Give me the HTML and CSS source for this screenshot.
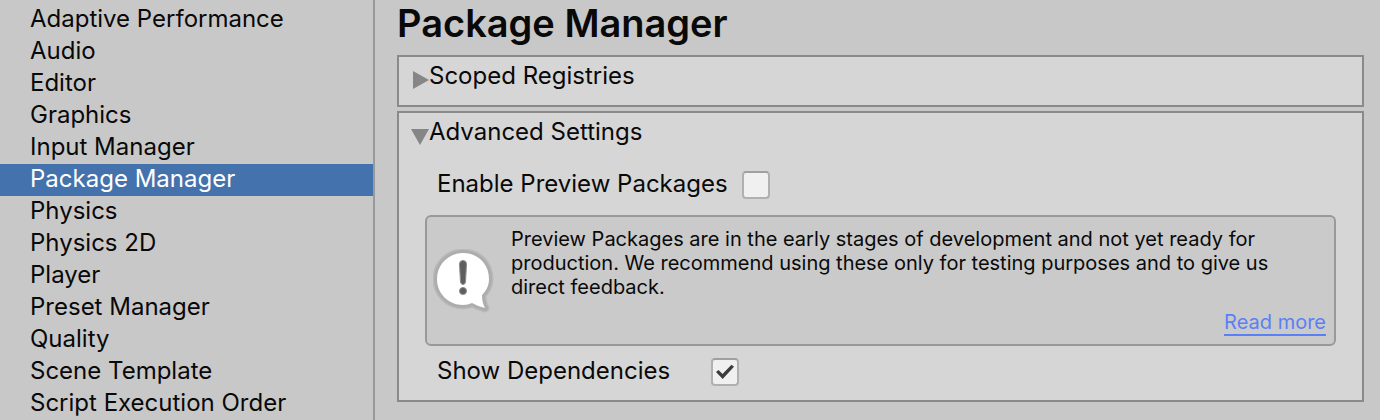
FILE: index.html
```html
<!DOCTYPE html>
<html lang="en">
<head>
<meta charset="utf-8">
<title>Project Settings</title>
<link rel="stylesheet" href="styles.css">
</head>
<body>
<div class="window">
  <nav class="sidebar">
    <a class="nav-item" href="#">Adaptive Performance</a>
    <a class="nav-item" href="#">Audio</a>
    <a class="nav-item" href="#">Editor</a>
    <a class="nav-item" href="#">Graphics</a>
    <a class="nav-item" href="#">Input Manager</a>
    <a class="nav-item selected" href="#" aria-current="page">Package Manager</a>
    <a class="nav-item" href="#">Physics</a>
    <a class="nav-item" href="#">Physics 2D</a>
    <a class="nav-item" href="#">Player</a>
    <a class="nav-item" href="#">Preset Manager</a>
    <a class="nav-item" href="#">Quality</a>
    <a class="nav-item" href="#">Scene Template</a>
    <a class="nav-item" href="#">Script Execution Order</a>
  </nav>
  <main class="content">
    <h1 class="title">Package Manager</h1>
    <section class="panel">
      <button class="foldout" type="button" aria-expanded="false">
        <svg class="arrow" viewBox="0 0 20 20" aria-hidden="true"><path d="M4 2 L20 11 L4 20 Z"/></svg>
        <span>Scoped Registries</span>
      </button>
    </section>
    <section class="panel">
      <button class="foldout" type="button" aria-expanded="true">
        <svg class="arrow" viewBox="0 0 20 20" aria-hidden="true"><path d="M2 4 L20 4 L11 20 Z"/></svg>
        <span>Advanced Settings</span>
      </button>
      <div class="settings">
        <div class="field">
          <label class="field-label" for="preview">Enable Preview Packages</label>
          <input class="check" id="preview" type="checkbox">
        </div>
        <div class="help">
          <svg class="help-icon" viewBox="0 0 64 66" aria-hidden="true">
            <path class="halo" d="M30 4 C45 4 56 15 56 30 C56 37 53 42 49 46 Q49 54 52 59 Q44 57 39 54 Q35 56 30 56 C16 56 4 45 4 30 C4 15 16 4 30 4 Z"/>
            <path class="bubble" d="M30 4 C45 4 56 15 56 30 C56 37 53 42 49 46 Q49 54 52 59 Q44 57 39 54 Q35 56 30 56 C16 56 4 45 4 30 C4 15 16 4 30 4 Z"/>
            <path class="mark" d="M26.500 15 Q26.500 11.500 30 11.500 Q33.500 11.500 33.500 15 L32.500 33 Q32 35.500 30 35.500 Q28 35.500 27.500 33 Z"/>
            <circle class="mark" cx="30" cy="42" r="3.500"/>
          </svg>
          <div class="help-body">
            <p class="help-text">Preview Packages are in the early stages of development and not yet ready for production. We recommend using these only for testing purposes and to give us direct feedback.</p>
            <a class="read-more" href="#">Read more</a>
          </div>
        </div>
        <div class="field">
          <label class="field-label" for="deps">Show Dependencies</label>
          <input class="check" id="deps" type="checkbox" checked>
        </div>
      </div>
    </section>
  </main>
</div>
</body>
</html>
```
FILE: styles.css
```css
* {
  box-sizing: border-box;
}

body {
  margin: 0;
  background: #c8c8c8;
  color: #090909;
  font: 24px/30px Inter, "Liberation Sans", sans-serif;
}

.window {
  display: flex;
  min-height: 100vh;
}

.sidebar {
  flex: 0 0 375px;
  padding-top: 4px;
  border-right: 2px solid #999;
}

.nav-item {
  display: block;
  padding: 0 30px 2px;
  color: inherit;
  text-decoration: none;
}

.nav-item.selected {
  background: #4472ac;
  color: #fff;
}

.content {
  flex: 1;
  min-width: 0;
  padding: 0 16px 16px 22px;
}

.title {
  margin: 0 0 9px;
  font-size: 38px;
  line-height: 46px;
  font-weight: 600;
}

.panel {
  margin-bottom: 4px;
  padding: 4px 12px 12px;
  background: #d6d6d6;
  border: 2px solid #8a8a8a;
}

.foldout {
  display: flex;
  align-items: center;
  width: 100%;
  padding: 0;
  margin-bottom: 2px;
  border: 0;
  background: none;
  color: inherit;
  font: inherit;
  text-align: left;
}

.arrow {
  flex: none;
  width: 20px;
  height: 20px;
  margin: 8px 0 2px -2px;
  fill: #868686;
}

.settings {
  padding: 20px 14px 0;
}

.field {
  display: flex;
  align-items: center;
  min-height: 32px;
  padding: 0 12px;
}

.field-label {
  min-width: 260px;
  margin-right: 14px;
  padding-bottom: 2px;
}

.check {
  appearance: none;
  display: grid;
  place-items: center;
  width: 28px;
  height: 28px;
  margin: 0;
  border: 2px solid #b0b0b0;
  border-top-color: #a0a0a0;
  border-radius: 4px;
  background: #f0f0f0;
}

.check:checked::before {
  content: "";
  width: 18px;
  height: 16px;
  background: #3c3c3c;
  clip-path: polygon(0 50%, 14% 38%, 36% 63%, 86% 4%, 100% 17%, 37% 94%);
}

.help {
  display: flex;
  align-items: center;
  margin: 14px 0 10px;
  padding: 10px 8px 8px 6px;
  background: #cacaca;
  border: 2px solid #999;
  border-radius: 6px;
  font-size: 20px;
  line-height: 24px;
}

.help-icon {
  flex: none;
  width: 64px;
  height: 66px;
  margin-right: 14px;
}

.halo {
  fill: none;
  stroke: #bababa;
  stroke-width: 9;
  stroke-linejoin: round;
}

.bubble {
  fill: #fff;
  stroke: #adadad;
  stroke-width: 6;
  stroke-linejoin: round;
  paint-order: stroke;
}

.mark {
  fill: #5e5e5e;
  stroke: #8c8c8c;
  stroke-width: 1;
}

.help-body {
  flex: 1;
  display: flex;
  flex-direction: column;
}

.help-text {
  max-width: 800px;
  margin: 0 0 11px;
}

.read-more {
  align-self: flex-end;
  border-bottom: 2px solid #5a80f5;
  color: #5a80f5;
  text-decoration: none;
}
```
